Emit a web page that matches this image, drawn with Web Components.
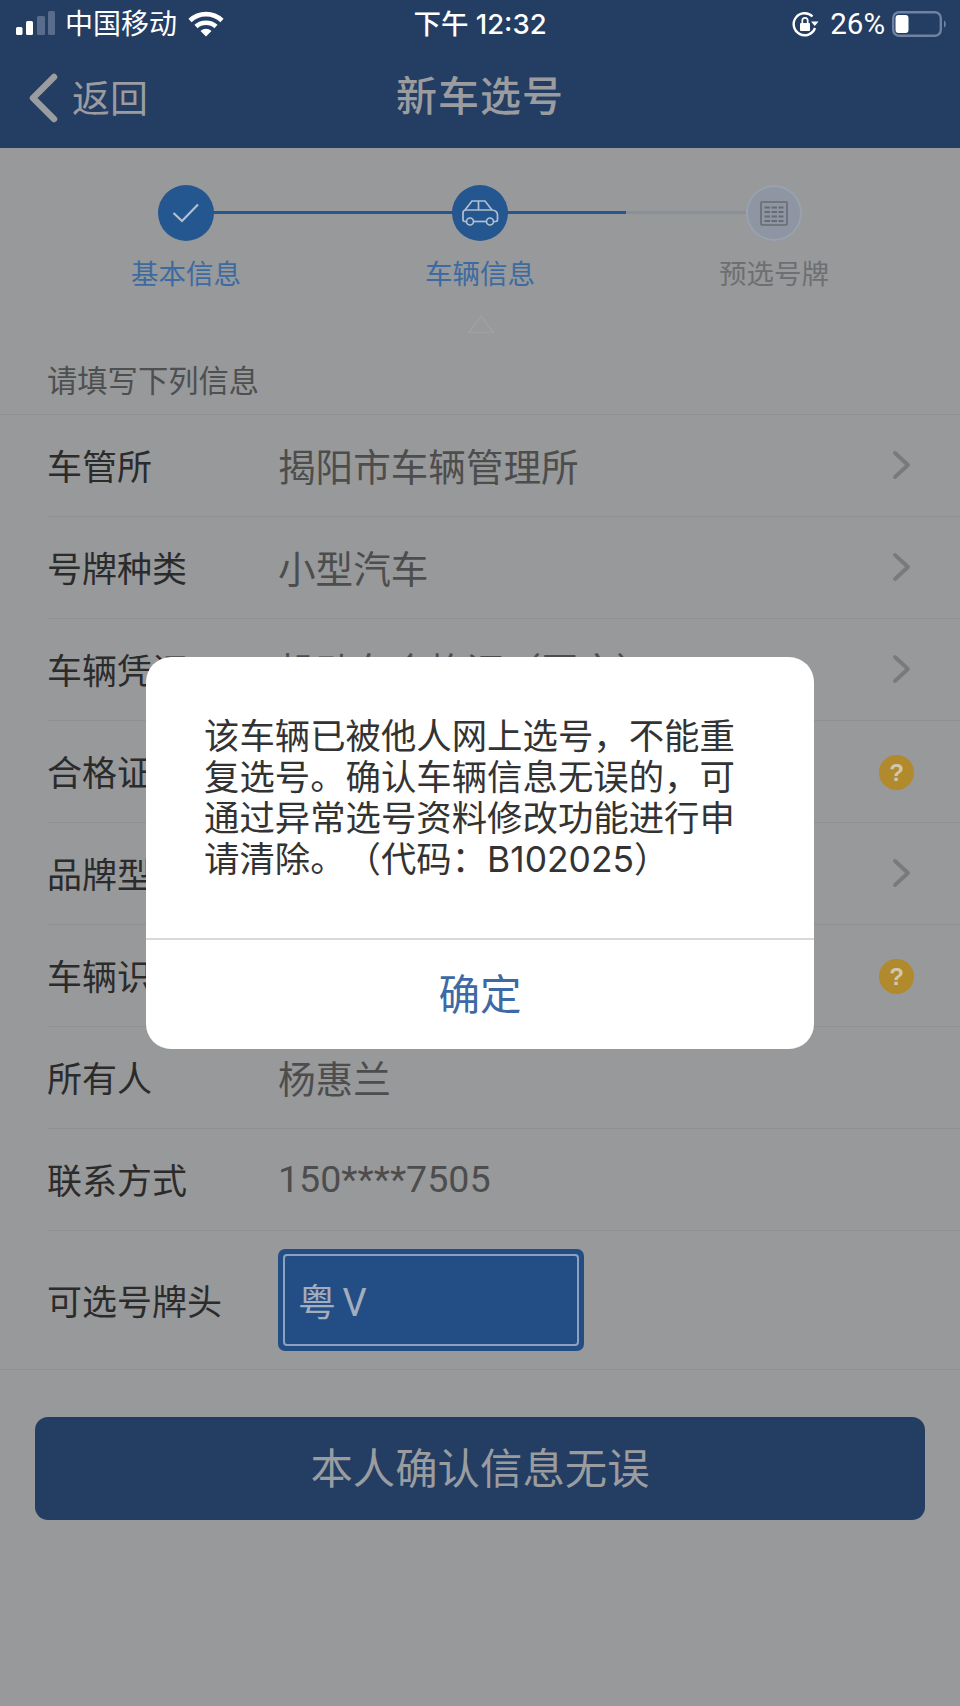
<!DOCTYPE html>
<html lang="zh">
<head>
<meta charset="utf-8">
<title>新车选号</title>
<style>
  html, body { margin: 0; padding: 0; }
  body {
    width: 960px;
    height: 1706px;
    overflow: hidden;
    background: #98999a;
    font-family: Inter, "Noto Sans CJK SC", sans-serif;
  }
  app-screen { height: 1706px; }
</style>
</head>
<body>
<app-screen>
  <nav-header title-text="新车选号"></nav-header>
  <step-bar></step-bar>
  <section-title>请填写下列信息</section-title>
  <form-list>
    <form-row label="车管所" value="揭阳市车辆管理所" end="arrow"></form-row>
    <form-row label="号牌种类" value="小型汽车" end="arrow"></form-row>
    <form-row label="车辆凭证" value="机动车合格证（国产）" end="arrow"></form-row>
    <form-row label="合格证编号" end="help"></form-row>
    <form-row label="品牌型号" end="arrow"></form-row>
    <form-row label="车辆识别代号" end="help"></form-row>
    <form-row label="所有人" value="杨惠兰"></form-row>
    <form-row label="联系方式" value="150****7505"></form-row>
    <plate-row label="可选号牌头" value="粤 V"></plate-row>
  </form-list>
  <main-button>本人确认信息无误</main-button>
  <alert-dialog action="确定">该车辆已被他人网上选号，不能重复选号。确认车辆信息无误的，可通过异常选号资料修改功能进行申请清除。（代码：B102025）</alert-dialog>
</app-screen>

<script>
const FONT = 'Inter, "Noto Sans CJK SC", sans-serif';

class AppScreen extends HTMLElement {
  constructor() {
    super();
    this.attachShadow({ mode: 'open' });
    this.shadowRoot.innerHTML = `
<style>
  :host { display: flex; flex-direction: column; position: relative; width: 960px; font-family: ${FONT}; }
</style>
<slot></slot>`;
  }
}

class StatusBar extends HTMLElement {
  constructor() {
    super();
    this.attachShadow({ mode: 'open' });
    this.shadowRoot.innerHTML = `
<style>
  :host { display: grid; grid-template-columns: 1fr auto 1fr; align-items: center; height: 48px; padding: 0 15px; color: #fff; }
  .left, .right { display: flex; align-items: center; }
  .right { justify-content: flex-end; margin-right: -3px; }
  .carrier { font-size: 28px; margin-left: 8px; line-height: 48px; }
  .wifi { margin-left: 11px; }
  .time { font-size: 27.5px; font-weight: 500; line-height: 48px; }
  .pct { font-family: Roboto, sans-serif; font-size: 29.500px; margin: 0 7px 0 12px; line-height: 48px; }
  svg { display: block; overflow: visible; }
</style>
<div class="left">
  <svg width="42" height="26" viewBox="0 0 42 26">
    <rect x="1" y="16" width="6.500" height="8" rx="1.500" fill="#fff"/>
    <rect x="11" y="10" width="7" height="14" rx="1.500" fill="#fff"/>
    <rect x="22" y="5" width="8" height="19" rx="1.500" fill="#5a6c8c"/>
    <rect x="33" y="0" width="7" height="24" rx="1.500" fill="#5a6c8c"/>
  </svg>
  <span class="carrier">中国移动</span>
  <svg class="wifi" width="36" height="26" viewBox="0 0 36 26" fill="none" stroke="#fff" stroke-width="4.600">
    <path d="M2 9.500C11 1 25 1 34 9.500"/>
    <path d="M8 15.500C13.500 10.500 22.500 10.500 28 15.500"/>
    <path d="M12.500 20 18 25.500 23.500 20C20 17 16 17 12.500 20Z" fill="#fff" stroke="none"/>
  </svg>
</div>
<span class="time">下午 12:32</span>
<div class="right">
  <svg width="26" height="26" viewBox="0 0 26 26" fill="none">
    <path d="M23 17A11 11 0 1 1 20.500 5.500" stroke="#fff" stroke-width="2.400"/>
    <path d="M19 10.500h7.500l-3.750 4.500z" fill="#fff"/>
    <rect x="8" y="12" width="10" height="8" rx="1" fill="#fff"/>
    <path d="M10.300 12.500V9.500a2.700 2.700 0 0 1 5.400 0V12.500" stroke="#fff" stroke-width="1.700"/>
  </svg>
  <span class="pct">26%</span>
  <svg width="56" height="26" viewBox="0 0 56 26" fill="none">
    <rect x="1.200" y="1.200" width="47.600" height="23.600" rx="6" stroke="#6f82a0" stroke-width="2.400"/>
    <rect x="3.500" y="4" width="13" height="18" rx="3" fill="#fff"/>
    <path d="M52 9.500c2.500 1 2.500 6 0 7z" fill="#6f82a0"/>
  </svg>
</div>`;
  }
}

class NavHeader extends HTMLElement {
  constructor() {
    super();
    this.attachShadow({ mode: 'open' });
    this.shadowRoot.innerHTML = `
<style>
  :host { display: block; background: #243d62; height: 148px; color: #9a9ca0; }
  .bar { display: grid; grid-template-columns: 1fr auto 1fr; align-items: center; height: 100px; padding: 0 28px; }
  .back { display: flex; align-items: center; gap: 14px; font-size: 38px; line-height: 1; }
  h1 { margin: 0 0 4px; font-size: 41px; font-weight: 500; line-height: 1; letter-spacing: 1px; }
  svg { display: block; }
</style>
<status-bar></status-bar>
<div class="bar">
  <div class="back">
    <svg width="30" height="50" viewBox="0 0 30 50" fill="none"><path d="M26 4 5 25l21 21" stroke="#9a9ca0" stroke-width="6.500" stroke-linecap="round" stroke-linejoin="round"/></svg>
    <span>返回</span>
  </div>
  <h1>${this.getAttribute('title-text') || ''}</h1>
  <div></div>
</div>`;
  }
}

class StepBar extends HTMLElement {
  constructor() {
    super();
    this.attachShadow({ mode: 'open' });
    this.shadowRoot.innerHTML = `
<style>
  :host { display: block; position: relative; height: 186px; }
  .steps { display: grid; grid-template-columns: repeat(3, 294px); justify-content: center; padding-top: 37px; }
  .step { display: flex; flex-direction: column; align-items: center; gap: 13px; position: relative; }
  .dot { width: 56px; height: 56px; border-radius: 50%; background: #24568f; display: flex; align-items: center; justify-content: center; position: relative; z-index: 1; }
  .dot.off { background: #8d96a2; box-shadow: inset 0 0 0 2px #9aa2ae; }
  .name { font-size: 27.500px; line-height: 40px; color: #3d6ba1; }
  .name.off { color: #6e6f72; }
  .line { position: absolute; left: 186px; top: 63px; height: 3px; background: #24568f; width: 440px; }
  .line.rest { left: 626px; width: 147px; background: #8a909a; }
  .tip { position: absolute; left: 468px; top: 167px; }
  svg { display: block; }
</style>
<div class="line"></div>
<div class="line rest"></div>
<div class="steps">
  <div class="step">
    <div class="dot"><svg width="28" height="20" viewBox="0 0 28 20" fill="none"><path d="M1.500 10 10 18 26 1.500" stroke="#b3c0d0" stroke-width="2.200"/></svg></div>
    <span class="name">基本信息</span>
  </div>
  <div class="step">
    <div class="dot"><svg width="37" height="27" viewBox="0 0 37 27" fill="none" stroke="#b3c0d0" stroke-width="1.700">
      <path d="M3 10 10 1h13l7 9"/>
      <path d="M16.500 1v9"/>
      <path d="M4.500 21.500H2.500A1.800 1.800 0 0 1 1 20v-7c0-2 1-3 3-3h26c3 0 5.500 2 5.500 4.500V20a1.800 1.800 0 0 1-1.500 1.500h-2.500"/>
      <path d="M11.500 21.500h13"/>
      <circle cx="8" cy="21.500" r="3.500"/><circle cx="28" cy="21.500" r="3.500"/>
    </svg></div>
    <span class="name">车辆信息</span>
  </div>
  <div class="step">
    <div class="dot off"><svg width="28" height="25" viewBox="0 0 28 25" fill="none" stroke="#686c72" stroke-width="1.600">
      <rect x="1" y="1" width="26" height="23" rx="1"/>
      <path d="M4.500 6.500h19M4.500 11h19M4.500 15.500h19M4.500 20h19" stroke-dasharray="5.500 1.500" stroke-width="1.800"/>
    </svg></div>
    <span class="name off">预选号牌</span>
  </div>
</div>
<svg class="tip" width="26" height="18" viewBox="0 0 26 18" fill="none"><path d="M0 17.500h26M1 17 13 1l12 16" stroke="#a0a1a3" stroke-width="1.500"/></svg>`;
  }
}

class SectionTitle extends HTMLElement {
  constructor() {
    super();
    this.attachShadow({ mode: 'open' });
    this.shadowRoot.innerHTML = `
<style>
  :host { display: flex; align-items: center; height: 80px; padding: 9px 0 0 47px; box-sizing: border-box; font-size: 30.300px; color: #4e4f51; }
</style>
<slot></slot>`;
  }
}

class FormList extends HTMLElement {
  constructor() {
    super();
    this.attachShadow({ mode: 'open' });
    this.shadowRoot.innerHTML = `
<style>
  :host { display: block; border-top: 1px solid #8f9092; border-bottom: 1px solid #8f9092; }
</style>
<slot></slot>`;
  }
}

class FormRow extends HTMLElement {
  constructor() {
    super();
    this.attachShadow({ mode: 'open' });
    const end = this.getAttribute('end');
    let endIcon = '';
    if (end === 'arrow') {
      endIcon = '<svg width="20" height="30" viewBox="0 0 20 30" fill="none"><path d="M3 3l13 12L3 27" stroke="#797a7c" stroke-width="3.800" stroke-linecap="round" stroke-linejoin="round"/></svg>';
    } else if (end === 'help') {
      endIcon = '<span class="help">?</span>';
    }
    this.shadowRoot.innerHTML = `
<style>
  :host { display: block; margin-left: 47px; height: 102px; box-sizing: border-box; border-bottom: 1px solid #8f9092; }
  .row { display: grid; grid-template-columns: 231px 1fr 81px; align-items: center; height: 100%; box-sizing: border-box; padding-bottom: 2px; }
  .label { font-size: 35px; color: #2b2b2b; white-space: nowrap; }
  .value { font-family: Roboto, "Noto Sans CJK SC", sans-serif; font-size: 37.600px; color: #4d4d4d; white-space: nowrap; }
  .end { display: flex; align-items: center; justify-content: flex-start; }
  .end svg { margin-left: 13px; }
  .help { width: 35px; height: 35px; margin-top: 4px; border-radius: 50%; background: #b08a2c; color: #cfc8ad; font: 700 24px/35px "Liberation Sans", sans-serif; text-align: center; }
</style>
<div class="row">
  <span class="label">${this.getAttribute('label')}</span>
  <span class="value">${this.getAttribute('value') || ''}</span>
  <span class="end">${endIcon}</span>
</div>`;
  }
}

class PlateRow extends HTMLElement {
  constructor() {
    super();
    this.attachShadow({ mode: 'open' });
    this.shadowRoot.innerHTML = `
<style>
  :host { display: block; margin-left: 47px; height: 138px; box-sizing: border-box; }
  .row { display: grid; grid-template-columns: 231px 306px; align-items: center; height: 100%; }
  .label { font-size: 35px; color: #2b2b2b; white-space: nowrap; padding-bottom: 2px; }
  .plate { height: 102px; box-sizing: border-box; background: #234d85; border-radius: 7px; padding: 5px; }
  .inner { height: 100%; box-sizing: border-box; border: 2px solid #8ea2bf; border-radius: 4px; padding: 0 0 2px 13px; display: flex; align-items: center; font-family: Roboto, "Noto Sans CJK SC", sans-serif; font-size: 38px; word-spacing: -3px; color: #a3adbb; }
</style>
<div class="row">
  <span class="label">${this.getAttribute('label')}</span>
  <div class="plate"><div class="inner">${this.getAttribute('value')}</div></div>
</div>`;
  }
}

class MainButton extends HTMLElement {
  constructor() {
    super();
    this.attachShadow({ mode: 'open' });
    this.shadowRoot.innerHTML = `
<style>
  :host { display: flex; align-items: center; justify-content: center; height: 103px; box-sizing: border-box; padding-bottom: 6px; margin: 47px 35px 0; border-radius: 13px; background: #243d62; color: #9a9ca0; font-size: 42.400px; }
</style>
<slot></slot>`;
  }
}

class AlertDialog extends HTMLElement {
  constructor() {
    super();
    this.attachShadow({ mode: 'open' });
    this.shadowRoot.innerHTML = `
<style>
  :host { display: block; position: absolute; left: 146px; top: 657px; width: 668px; height: 392px; border-radius: 25px; background: #fff; overflow: hidden; }
  .msg { height: 281px; box-sizing: border-box; padding: 59px 54px 0 58px; font-size: 35.400px; line-height: 41px; color: #333; text-spacing-trim: space-all; }
  .action { border-top: 2px solid #d8d9db; height: 109px; box-sizing: border-box; padding-bottom: 4px; display: flex; align-items: center; justify-content: center; font-size: 41.500px; color: #3d6aa5; }
</style>
<div class="msg"><slot></slot></div>
<div class="action">${this.getAttribute('action')}</div>`;
  }
}

customElements.define('app-screen', AppScreen);
customElements.define('status-bar', StatusBar);
customElements.define('nav-header', NavHeader);
customElements.define('step-bar', StepBar);
customElements.define('section-title', SectionTitle);
customElements.define('form-list', FormList);
customElements.define('form-row', FormRow);
customElements.define('plate-row', PlateRow);
customElements.define('main-button', MainButton);
customElements.define('alert-dialog', AlertDialog);
</script>
</body>
</html>
